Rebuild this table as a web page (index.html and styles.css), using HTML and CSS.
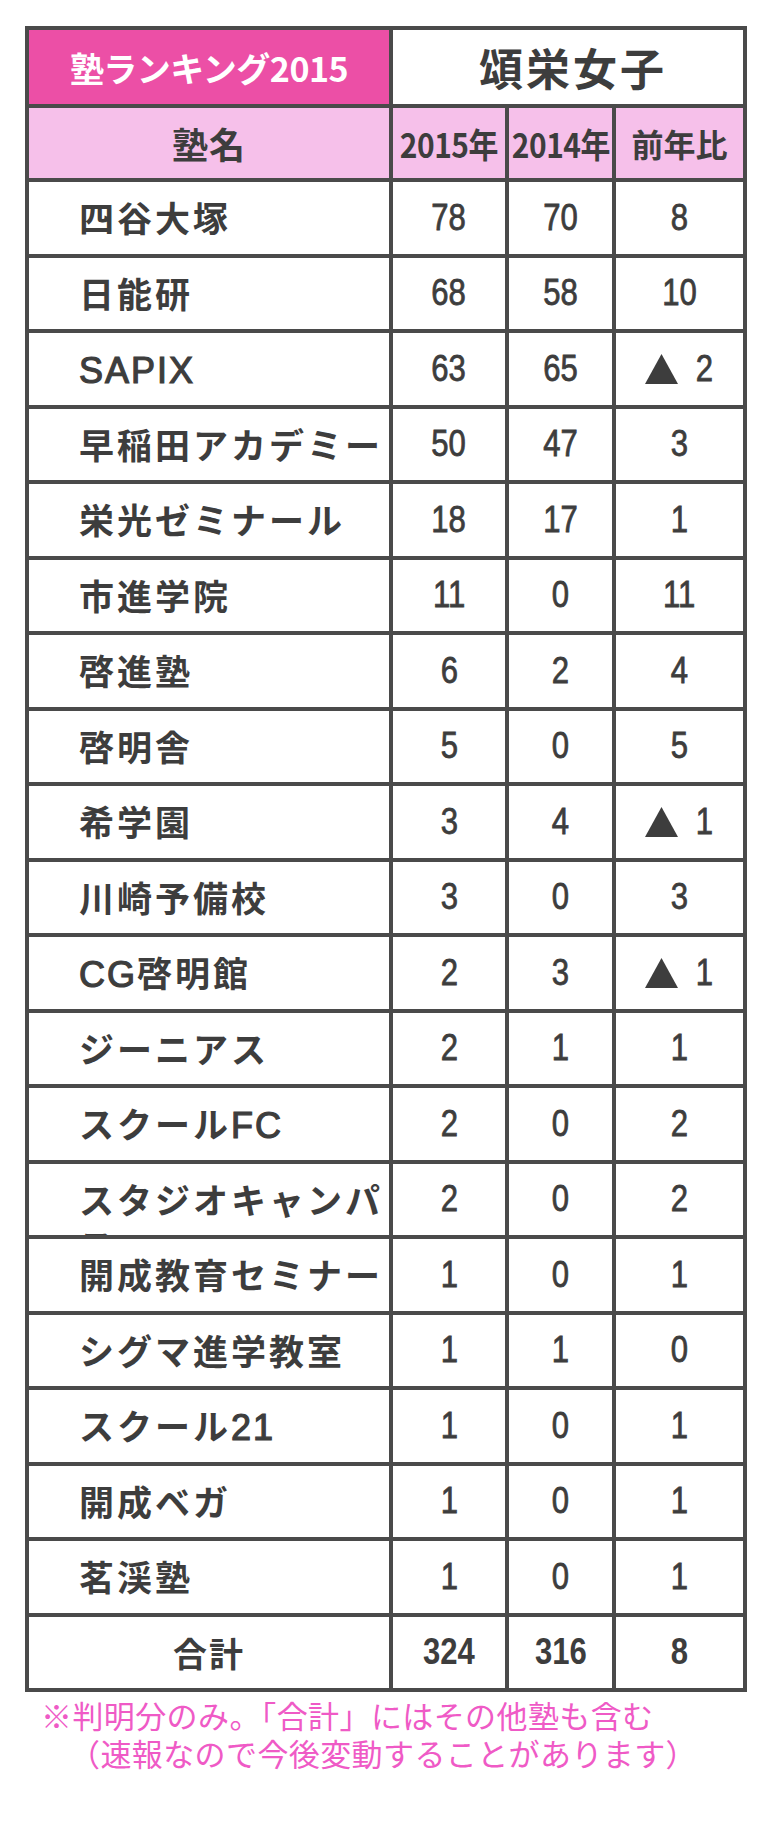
FILE: index.html
```html
<!DOCTYPE html>
<html lang="ja">
<head>
<meta charset="utf-8">
<title>塾ランキング2015 頌栄女子</title>
<link rel="stylesheet" href="styles.css">
</head>
<body>
<div class="page">
  <div class="ranking">
    <div class="cell title">塾ランキング2015</div>
    <div class="cell school">頌栄女子</div>

    <div class="cell head head-name">塾名</div>
    <div class="cell head"><span class="yr">2015年</span></div>
    <div class="cell head"><span class="yr">2014年</span></div>
    <div class="cell head"><span class="ratio">前年比</span></div>

    <div class="cell name">四谷大塚</div><div class="cell num"><span class="n">78</span></div><div class="cell num"><span class="n">70</span></div><div class="cell num"><span class="n">8</span></div>
    <div class="cell name">日能研</div><div class="cell num"><span class="n">68</span></div><div class="cell num"><span class="n">58</span></div><div class="cell num"><span class="n">10</span></div>
    <div class="cell name"><span class="lat">SAPIX</span></div><div class="cell num"><span class="n">63</span></div><div class="cell num"><span class="n">65</span></div><div class="cell num"><svg class="tri" viewBox="0 0 33 30"><polygon points="16.5,0 33,30 0,30"/></svg><span class="n">2</span></div>
    <div class="cell name">早稲田アカデミー</div><div class="cell num"><span class="n">50</span></div><div class="cell num"><span class="n">47</span></div><div class="cell num"><span class="n">3</span></div>
    <div class="cell name">栄光ゼミナール</div><div class="cell num"><span class="n">18</span></div><div class="cell num"><span class="n">17</span></div><div class="cell num"><span class="n">1</span></div>
    <div class="cell name">市進学院</div><div class="cell num"><span class="n">11</span></div><div class="cell num"><span class="n">0</span></div><div class="cell num"><span class="n">11</span></div>
    <div class="cell name">啓進塾</div><div class="cell num"><span class="n">6</span></div><div class="cell num"><span class="n">2</span></div><div class="cell num"><span class="n">4</span></div>
    <div class="cell name">啓明舎</div><div class="cell num"><span class="n">5</span></div><div class="cell num"><span class="n">0</span></div><div class="cell num"><span class="n">5</span></div>
    <div class="cell name">希学園</div><div class="cell num"><span class="n">3</span></div><div class="cell num"><span class="n">4</span></div><div class="cell num"><svg class="tri" viewBox="0 0 33 30"><polygon points="16.5,0 33,30 0,30"/></svg><span class="n">1</span></div>
    <div class="cell name">川崎予備校</div><div class="cell num"><span class="n">3</span></div><div class="cell num"><span class="n">0</span></div><div class="cell num"><span class="n">3</span></div>
    <div class="cell name"><span class="lat">CG</span>啓明館</div><div class="cell num"><span class="n">2</span></div><div class="cell num"><span class="n">3</span></div><div class="cell num"><svg class="tri" viewBox="0 0 33 30"><polygon points="16.5,0 33,30 0,30"/></svg><span class="n">1</span></div>
    <div class="cell name">ジーニアス</div><div class="cell num"><span class="n">2</span></div><div class="cell num"><span class="n">1</span></div><div class="cell num"><span class="n">1</span></div>
    <div class="cell name">スクール<span class="lat">FC</span></div><div class="cell num"><span class="n">2</span></div><div class="cell num"><span class="n">0</span></div><div class="cell num"><span class="n">2</span></div>
    <div class="cell name">スタジオキャンパス</div><div class="cell num"><span class="n">2</span></div><div class="cell num"><span class="n">0</span></div><div class="cell num"><span class="n">2</span></div>
    <div class="cell name">開成教育セミナー</div><div class="cell num"><span class="n">1</span></div><div class="cell num"><span class="n">0</span></div><div class="cell num"><span class="n">1</span></div>
    <div class="cell name">シグマ進学教室</div><div class="cell num"><span class="n">1</span></div><div class="cell num"><span class="n">1</span></div><div class="cell num"><span class="n">0</span></div>
    <div class="cell name">スクール<span class="lat">21</span></div><div class="cell num"><span class="n">1</span></div><div class="cell num"><span class="n">0</span></div><div class="cell num"><span class="n">1</span></div>
    <div class="cell name">開成ベガ</div><div class="cell num"><span class="n">1</span></div><div class="cell num"><span class="n">0</span></div><div class="cell num"><span class="n">1</span></div>
    <div class="cell name">茗渓塾</div><div class="cell num"><span class="n">1</span></div><div class="cell num"><span class="n">0</span></div><div class="cell num"><span class="n">1</span></div>

    <div class="cell total">合計</div><div class="cell num"><span class="n bold">324</span></div><div class="cell num"><span class="n bold">316</span></div><div class="cell num"><span class="n bold">8</span></div>
  </div>
  <div class="note">
    <p class="note-line">※判明分のみ。「合計」にはその他塾も含む</p>
    <p class="note-line indent">（速報なので今後変動することがあります）</p>
  </div>
</div>
</body>
</html>
```

FILE: styles.css
```css
html, body {
  margin: 0;
  padding: 0;
  background: #ffffff;
}

.page {
  padding: 26px 0 0 25px;
  font-family: "Noto Sans CJK JP", "Liberation Sans", sans-serif;
  color: #3d3d3d;
}

.ranking {
  display: grid;
  width: max-content;
  grid-template-columns: 360px 112px 103px 127px;
  grid-template-rows: 74px 70px repeat(20, 71.5px);
  gap: 4px;
  padding: 4px;
  background: #4a4a4a;
}

.cell {
  background: #ffffff;
  display: flex;
  align-items: center;
  justify-content: center;
  overflow: hidden;
}

.title {
  background: #ec4fa6;
  color: #ffffff;
  font-size: 34px;
  font-weight: 700;
  letter-spacing: -0.5px;
}

.school {
  grid-column: 2 / 5;
  font-size: 44px;
  font-weight: 700;
  letter-spacing: 3px;
  padding-left: 10px;
}

.head {
  background: #f6c0ea;
  font-weight: 700;
}

.head-name {
  font-size: 36px;
  letter-spacing: 1px;
}

.yr {
  display: inline-block;
  font-size: 34px;
  letter-spacing: -0.5px;
  transform: scaleX(0.88);
  white-space: nowrap;
}

.ratio {
  font-size: 32px;
}

.name {
  display: block;
  padding: 12px 0 0 50px;
  font-size: 35px;
  line-height: 46px;
  font-weight: 700;
  letter-spacing: 3px;
}

.lat {
  font-family: "Liberation Sans", sans-serif;
  font-size: 36px;
  font-weight: 400;
  letter-spacing: 2px;
  -webkit-text-stroke: 1.2px #3d3d3d;
}

.total {
  font-size: 34px;
  font-weight: 700;
  letter-spacing: 2px;
}

.num {
  font-family: "Liberation Sans", "Noto Sans CJK JP", sans-serif;
}

.n {
  display: inline-block;
  font-size: 37px;
  transform: scaleX(0.84);
  -webkit-text-stroke: 0.8px #3d3d3d;
}

.n.bold {
  font-weight: 700;
  -webkit-text-stroke: 0;
}

.tri {
  width: 33px;
  height: 30px;
  margin-right: 16px;
  fill: #3d3d3d;
}

.note {
  margin-top: 4px;
  padding-left: 16px;
  color: #ef5ac6;
  font-size: 31px;
  line-height: 38px;
  letter-spacing: 0.4px;
}

.note-line {
  margin: 0;
}

.indent {
  padding-left: 28px;
}
```
